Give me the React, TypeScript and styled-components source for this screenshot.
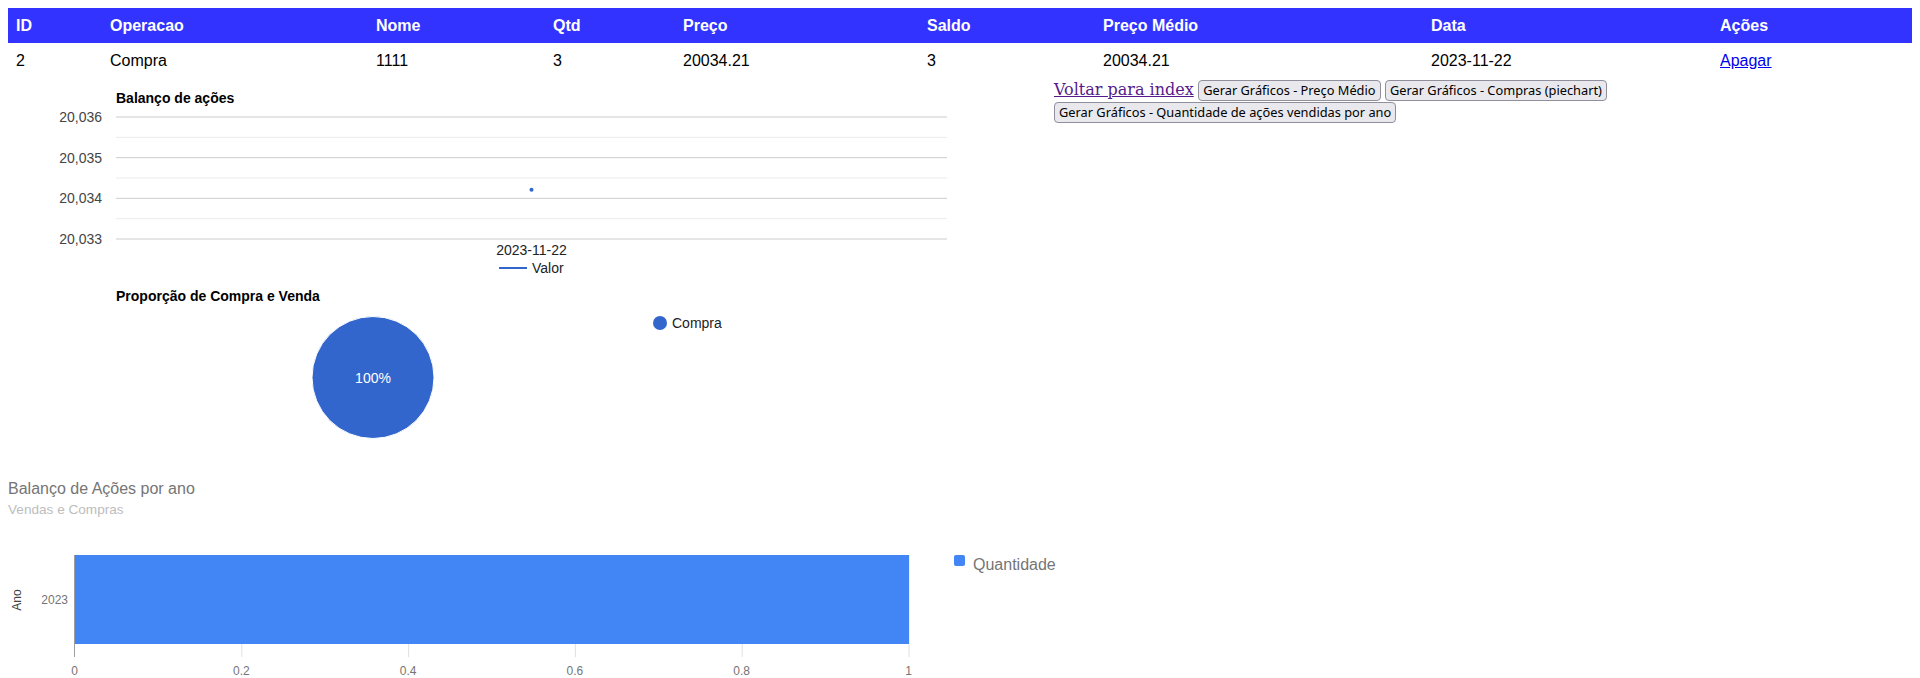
import styled, { createGlobalStyle } from "styled-components"


const GlobalStyle = createGlobalStyle`
    body {
        margin: 8px;
        font-family: "Liberation Sans", Arial, sans-serif;
        background: #ffffff;
    }
`

const columns = [
    { label: 'ID', w: 94 },
    { label: 'Operacao', w: 266 },
    { label: 'Nome', w: 177 },
    { label: 'Qtd', w: 130 },
    { label: 'Preço', w: 244 },
    { label: 'Saldo', w: 176 },
    { label: 'Preço Médio', w: 328 },
    { label: 'Data', w: 289 },
    { label: 'Ações', w: 200 },
]

const row = ['2', 'Compra', '1111', '3', '20034.21', '3', '20034.21', '2023-11-22']

const majorTicks = ['20,036', '20,035', '20,034', '20,033']


function LineChart() {
    const top = 39
    const step = 40.67
    return (
        <ChartSvg width={1046} height={202}>
            <text x={108} y={24.5} fontSize={14} fontWeight="bold" fill="#000">Balanço de ações</text>
            {[0, 1, 2].map(i => (
                <line key={'m' + i} x1={108} x2={939} y1={top + step * i + step / 2} y2={top + step * i + step / 2} stroke="#ebebeb" />
            ))}
            {majorTicks.map((t, i) => (
                <g key={t}>
                    <line x1={108} x2={939} y1={top + step * i} y2={top + step * i} stroke="#cccccc" />
                    <text x={94} y={top + step * i + 5} fontSize={14} fill="#444" textAnchor="end">{t}</text>
                </g>
            ))}
            <circle cx={523.5} cy={111.8} r={2} fill="#3366cc" />
            <text x={523.5} y={177} fontSize={14} fill="#222" textAnchor="middle">2023-11-22</text>
            <line x1={491} x2={519} y1={190} y2={190} stroke="#3366cc" strokeWidth={2} />
            <text x={524} y={195} fontSize={14} fill="#222">Valor</text>
        </ChartSvg>
    )
}


function PieChart() {
    return (
        <ChartSvg width={1046} height={200}>
            <text x={108} y={21} fontSize={14} fontWeight="bold" fill="#000">Proporção de Compra e Venda</text>
            <circle cx={365} cy={97.5} r={61} fill="#3366cc" stroke="#ffffff" strokeWidth={1} />
            <text x={365} y={102.5} fontSize={14} fill="#ffffff" textAnchor="middle">100%</text>
            <circle cx={652} cy={43} r={7} fill="#3366cc" />
            <text x={664} y={48} fontSize={14} fill="#222">Compra</text>
        </ChartSvg>
    )
}


function BarChart() {
    const ticks = ['0', '0.2', '0.4', '0.6', '0.8', '1']
    const left = 67
    const span = 834
    return (
        <ChartSvg width={1100} height={220} fontFamily="Roboto, sans-serif">
            <text x={0} y={13.5} fontSize={16} fill="#757575">Balanço de Ações por ano</text>
            <text x={0} y={34} fontSize={13.6} fill="#bdbdbd">Vendas e Compras</text>
            {ticks.map((t, i) => (
                <g key={t}>
                    {i > 0 && <line x1={left + span / 5 * i} x2={left + span / 5 * i} y1={75} y2={177} stroke="#e0e0e0" />}
                    <text x={left - 0.5 + span / 5 * i} y={195} fontSize={12} fill="#757575" textAnchor="middle">{t}</text>
                </g>
            ))}
            <rect x={left} y={75} width={span} height={89} fill="#4285f4" />
            <line x1={66.5} x2={66.5} y1={75} y2={177} stroke="#9e9e9e" />
            <text x={60} y={124} fontSize={12} fill="#757575" textAnchor="end">2023</text>
            <text x={0} y={0} fontSize={12} fill="#424242" textAnchor="middle" transform="translate(13 120) rotate(-90)">Ano</text>
            <rect x={946} y={75} width={11} height={11} rx={2} fill="#4285f4" />
            <text x={965} y={89.5} fontSize={16} fill="#757575">Quantidade</text>
        </ChartSvg>
    )
}


export default function App() {
    return (
        <>
            <GlobalStyle />
            <Table>
                <thead>
                    <tr>
                        {columns.map(c => (
                            <Th key={c.label} $w={c.w}>{c.label}</Th>
                        ))}
                    </tr>
                </thead>
                <tbody>
                    <tr>
                        {row.map((v, i) => (
                            <Td key={i}>{v}</Td>
                        ))}
                        <Td><DeleteLink href="#">Apagar</DeleteLink></Td>
                    </tr>
                </tbody>
            </Table>
            <Main>
                <Charts>
                    <LineChart />
                    <PieChart />
                </Charts>
                <Actions>
                    <BackLink href="#">Voltar para index</BackLink>{' '}
                    <Button>Gerar Gráficos - Preço Médio</Button>{' '}
                    <Button>Gerar Gráficos - Compras (piechart)</Button>{' '}
                    <Button>Gerar Gráficos - Quantidade de ações vendidas por ano</Button>
                </Actions>
            </Main>
            <BarChart />
        </>
    )
}


const Table = styled.table`
    width: 100%;
    border-collapse: collapse;
    font-size: 16px;
`

const Th = styled.th<{ $w: number }>`
    width: ${props => props.$w}px;
    height: 35px;
    padding: 0 8px;
    box-sizing: border-box;
    background-color: #3333ff;
    color: white;
    font-weight: bold;
    text-align: left;
`

const Td = styled.td`
    height: 35px;
    padding: 0 8px;
    color: #000;
    text-align: left;
`

const DeleteLink = styled.a`
    color: #0000ee;
    text-decoration: underline;
`

const Main = styled.div`
    display: flex;
    align-items: flex-start;
`

const Charts = styled.div`
    width: 1046px;
    flex-shrink: 0;
    display: flex;
    flex-direction: column;
`

const ChartSvg = styled.svg`
    display: block;
    font-family: "Liberation Sans", Arial, sans-serif;
`

const Actions = styled.div`
    flex: 1;
    padding-top: 1px;
    line-height: 21px;
`

const BackLink = styled.a`
    font-family: "DejaVu Serif", serif;
    font-size: 16px;
    color: #551a8b;
    text-decoration: underline;
`

const Button = styled.button`
    font-family: "Noto Sans", sans-serif;
    font-size: 12.8px;
    color: #000;
    background: #e9e9ed;
    border: 1px solid #8f8f9d;
    border-radius: 4px;
    padding: 0 4px;
    height: 21px;
    line-height: 19px;
    margin: 0;
`
